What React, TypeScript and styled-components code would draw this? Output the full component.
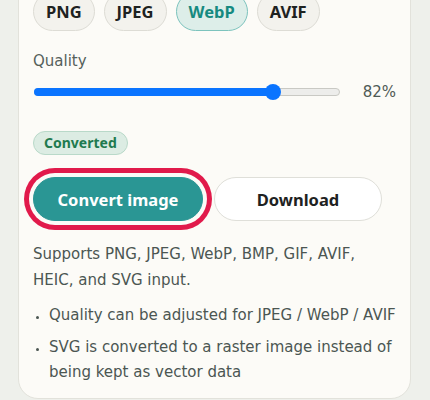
import React from "react";
import styled, { createGlobalStyle } from "styled-components";

const GlobalStyle = createGlobalStyle`
  body {
    margin: 0;
    background: #eef0eb;
    font-family: "DejaVu Sans", "Noto Sans", sans-serif;
  }
`;

const Page = styled.div`
  padding: 0 19px 0 18px;
  margin-top: -24px;
`;

const Card = styled.div`
  background: #fcfbf7;
  border: 1px solid #e2e2db;
  border-radius: 20px;
  padding: 15px 14px 13px 14px;
`;

const ChipRow = styled.div`
  display: flex;
  gap: 9px;
`;

const Chip = styled.button<{ active?: boolean }>`
  height: 39px;
  padding: 0 12px;
  border-radius: 20px;
  border: 1px solid ${(p) => (p.active ? "#7cc3bd" : "#dddcd5")};
  background: ${(p) => (p.active ? "#ddeee9" : "#f3f2ed")};
  color: ${(p) => (p.active ? "#168a80" : "#1e2221")};
  font-family: "Noto Sans", sans-serif;
  font-size: 16.5px;
  font-weight: 700;
`;

const Label = styled.div`
  margin-top: 19px;
  font-size: 15px;
  line-height: 22px;
  color: #55605b;
`;

const SliderRow = styled.div`
  display: flex;
  align-items: center;
  margin-top: 10px;
  height: 20px;
`;

const Track = styled.div`
  position: relative;
  flex: 1;
  margin-left: 1px;
  height: 8px;
  border-radius: 4px;
  background: #ededeb;
  border: 1px solid #c9c9c4;
  box-sizing: border-box;
`;

const Fill = styled.div`
  height: 8px;
  margin: -1px;
  border-radius: 4px;
  background: #0a74ff;
`;

const Thumb = styled.div`
  position: absolute;
  top: 50%;
  width: 16px;
  height: 16px;
  margin: -8px 0 0 -8px;
  border-radius: 50%;
  background: #0a74ff;
`;

const Value = styled.div`
  width: 56px;
  text-align: right;
  font-size: 15px;
  color: #4f5a55;
`;

const Badge = styled.div`
  display: inline-block;
  margin-top: 29px;
  padding: 0 10px;
  height: 24px;
  line-height: 22px;
  box-sizing: border-box;
  border-radius: 12px;
  background: #dcece3;
  border: 1px solid #b9d9c9;
  color: #1f7a4f;
  font-family: "Noto Sans", sans-serif;
  font-size: 14px;
  font-weight: 700;
`;

const ButtonRow = styled.div`
  display: flex;
  gap: 11px;
  margin-top: 22px;
`;

const Button = styled.button<{ primary?: boolean }>`
  height: 44px;
  width: ${(p) => (p.primary ? "170px" : "168px")};
  border-radius: 22px;
  font-family: "Noto Sans", sans-serif;
  font-size: 16.5px;
  font-weight: 700;
  border: 1px solid ${(p) => (p.primary ? "#2a9694" : "#dfdfd9")};
  background: ${(p) => (p.primary ? "#2a9694" : "#ffffff")};
  color: ${(p) => (p.primary ? "#ffffff" : "#1e2221")};
  box-shadow: ${(p) =>
    p.primary ? "0 0 0 4px #fcfbf7, 0 0 0 9px #e11a4b" : "none"};
`;

const Note = styled.p`
  margin: 20px 0 0;
  font-size: 15px;
  line-height: 26px;
  color: #4b5652;
`;

const List = styled.ul`
  margin: 10px 0 0;
  padding-left: 16px;
  font-size: 15px;
  line-height: 25px;
  color: #4b5652;
`;

const Item = styled.li`
  margin-bottom: 7px;
  &:last-child {
    margin-bottom: 0;
  }
  &::marker {
    font-size: 11px;
  }
`;

const formats = ["PNG", "JPEG", "WebP", "AVIF"];

function App() {
  const quality = 82;
  // range input runs from 10 to 100
  const pos = (quality - 10) / 90;
  const left = `calc(8px + (100% - 16px) * ${pos})`;

  return (
    <Page>
      <GlobalStyle />
      <Card>
        <ChipRow>
          {formats.map((f) => (
            <Chip key={f} active={f === "WebP"}>
              {f}
            </Chip>
          ))}
        </ChipRow>
        <Label>Quality</Label>
        <SliderRow>
          <Track>
            <Fill style={{ width: left }} />
            <Thumb style={{ left }} />
          </Track>
          <Value>{quality}%</Value>
        </SliderRow>
        <Badge>Converted</Badge>
        <ButtonRow>
          <Button primary>Convert image</Button>
          <Button>Download</Button>
        </ButtonRow>
        <Note>
          Supports PNG, JPEG, WebP, BMP, GIF, AVIF, HEIC, and SVG input.
        </Note>
        <List>
          <Item>Quality can be adjusted for JPEG / WebP / AVIF</Item>
          <Item>
            SVG is converted to a raster image instead of being kept as vector
            data
          </Item>
        </List>
      </Card>
    </Page>
  );
}

export default App;
